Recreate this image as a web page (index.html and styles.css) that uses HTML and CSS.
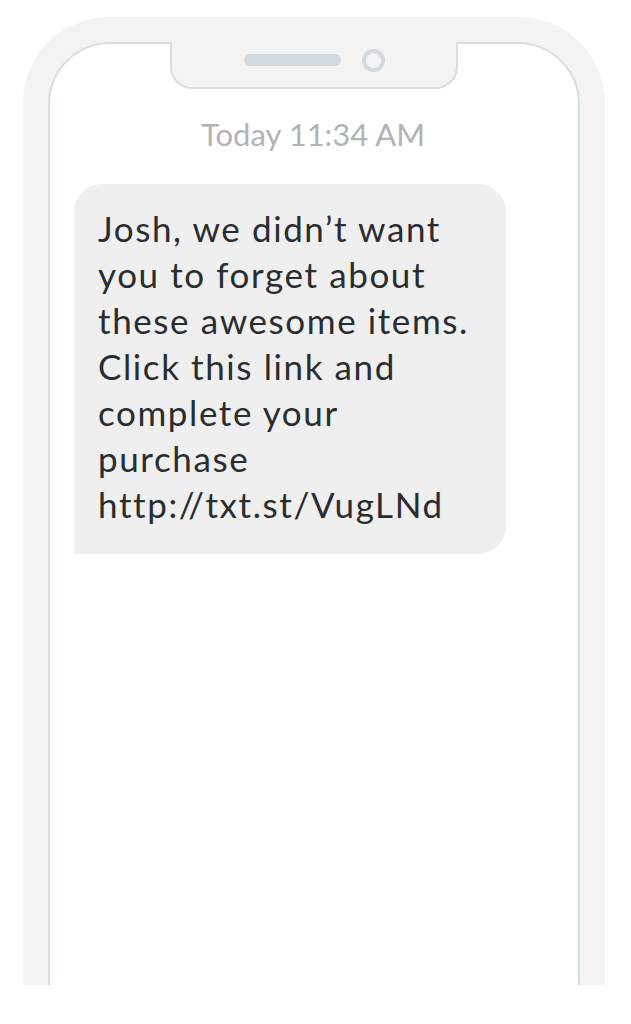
FILE: index.html
```html
<!DOCTYPE html>
<html>
<head>
<meta charset="utf-8">
<link rel="stylesheet" href="styles.css">
</head>
<body>
<div class="phone">
  <div class="screen">
    <div class="notch">
      <div class="speaker"></div>
      <div class="camera"></div>
    </div>
    <div class="stamp">Today 11:34 AM</div>
    <div class="bubble">Josh, we didn’t want<br>you to forget about<br>these awesome items.<br>Click this link and<br>complete your<br>purchase<br>http://txt.st/VugLNd</div>
  </div>
</div>
</body>
</html>
```

FILE: styles.css
```css
html, body {
  margin: 0;
  padding: 0;
  background: #ffffff;
}
body {
  width: 631px;
  height: 1024px;
  overflow: hidden;
  font-family: Lato, "Open Sans", sans-serif;
}
.phone {
  box-sizing: border-box;
  margin: 17px 0 0 23px;
  width: 582px;
  height: 968px;
  background: #f3f3f3;
  border-radius: 86px 86px 0 0;
  padding: 25px 25px 0 25px;
}
.screen {
  position: relative;
  box-sizing: border-box;
  height: 100%;
  background: #ffffff;
  border: 2px solid #d5dee3;
  border-bottom: none;
  border-radius: 62px 62px 0 0;
  padding-top: 74px;
}
.notch {
  position: absolute;
  top: -2px;
  left: 50%;
  transform: translateX(-50%);
  box-sizing: border-box;
  width: 288px;
  height: 47px;
  background: #f3f3f3;
  border: 2px solid #d5dee3;
  border-top: none;
  border-radius: 0 0 22px 22px;
  padding-bottom: 9px;
  display: flex;
  align-items: center;
  justify-content: center;
  gap: 21px;
}
.speaker {
  width: 97px;
  height: 12px;
  border-radius: 6px;
  background: #d2dadf;
}
.camera {
  box-sizing: border-box;
  width: 23px;
  height: 23px;
  border-radius: 50%;
  border: 4px solid #d2dadf;
}
.stamp {
  text-align: center;
  font-size: 31px;
  line-height: 32px;
  color: #b3b3b3;
  margin-left: -2px;
}
.bubble {
  box-sizing: border-box;
  margin: 34px 0 0 24px;
  width: 432px;
  height: 370px;
  background: #efefef;
  border-radius: 28px 28px 28px 0;
  padding: 21px 20px 24px 24px;
  font-size: 35px;
  line-height: 46px;
  letter-spacing: 1.6px;
  color: #2a2d30;
  white-space: nowrap;
}
```
